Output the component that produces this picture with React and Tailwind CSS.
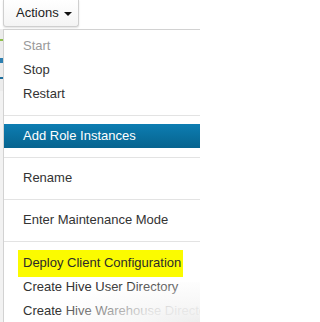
import React from 'react';

const sections = [
    [
        { label: 'Start', disabled: true },
        { label: 'Stop' },
        { label: 'Restart' },
    ],
    [{ label: 'Add Role Instances', active: true }],
    [{ label: 'Rename' }],
    [{ label: 'Enter Maintenance Mode' }],
    [
        { label: 'Deploy Client Configuration', marked: true },
        { label: 'Create Hive User Directory' },
        { label: 'Create Hive Warehouse Directory' },
    ],
];

function MenuItem({ item }) {
    if (item.active) {
        return (
            <div className="h-6 flex items-center pl-[19px] text-white bg-gradient-to-b from-[#0d7db2] to-[#07648f] whitespace-nowrap">
                {item.label}
            </div>
        );
    }
    if (item.marked) {
        return (
            <div className="h-6 flex items-center pl-[14px] whitespace-nowrap">
                <span className="h-[27px] flex items-center pl-[5px] pr-[2px] bg-[#fbfb00] text-[#2b2b2b]">{item.label}</span>
            </div>
        );
    }
    return (
        <div className={`h-6 flex items-center pl-[19px] whitespace-nowrap ${item.disabled ? "text-[#9a9a9a]" : "text-[#333333]"}`}>
            {item.label}
        </div>
    );
}

export default function App() {
    return (
        <div className="relative w-[200px] h-[322px] overflow-hidden bg-white text-[13px] font-['Liberation_Sans',Arial,sans-serif]">
            <div className="h-[29px] pl-[3px]">
                <button className="h-[27px] w-[76px] flex items-center pl-[12px] gap-[5px] border border-t-0 border-[#cfcfcf] rounded-b-[3px] bg-gradient-to-b from-white to-[#f4f4f4] shadow-[0_1px_2px_rgba(0,0,0,0.12)] text-[#222]">
                    <span>Actions</span>
                    <span className="w-0 h-0 border-x-[4px] border-x-transparent border-t-[4px] border-t-[#111] mt-[1px]"></span>
                </button>
            </div>

            <div className="flex">
                <div className="w-[3px] shrink-0 flex flex-col bg-[#ececec]">
                    <div className="h-[10px]"></div>
                    <div className="h-[2px] bg-[#8dc04a]"></div>
                    <div className="h-[17px]"></div>
                    <div className="h-[5px] bg-[#2d7fb0]"></div>
                    <div className="h-[14px]"></div>
                    <div className="h-[2px] bg-[#1f6f9e]"></div>
                    <div className="h-[12px]"></div>
                    <div className="flex-1 bg-[#f2f2f2]"></div>
                </div>

                <div className="w-[260px] shrink-0 border-l border-t border-[#d2d2d2] bg-white pt-[4px] pb-2">
                    {sections.map((section, i) => (
                        <div key={i}>
                            {i > 0 && <div className={`h-px bg-[#e3e3e3] mt-[9px] ${i === 4 ? "mb-[9px]" : "mb-[8px]"}`}></div>}
                            {section.map((item) => (
                                <MenuItem key={item.label} item={item} />
                            ))}
                        </div>
                    ))}
                </div>
            </div>

            <div className="absolute right-0 bottom-0 w-[140px] h-[40px] pointer-events-none bg-[radial-gradient(ellipse_at_bottom_right,rgba(238,238,238,1)_0%,rgba(246,246,246,0.9)_30%,rgba(255,255,255,0)_80%)]"></div>
        </div>
    );
}
